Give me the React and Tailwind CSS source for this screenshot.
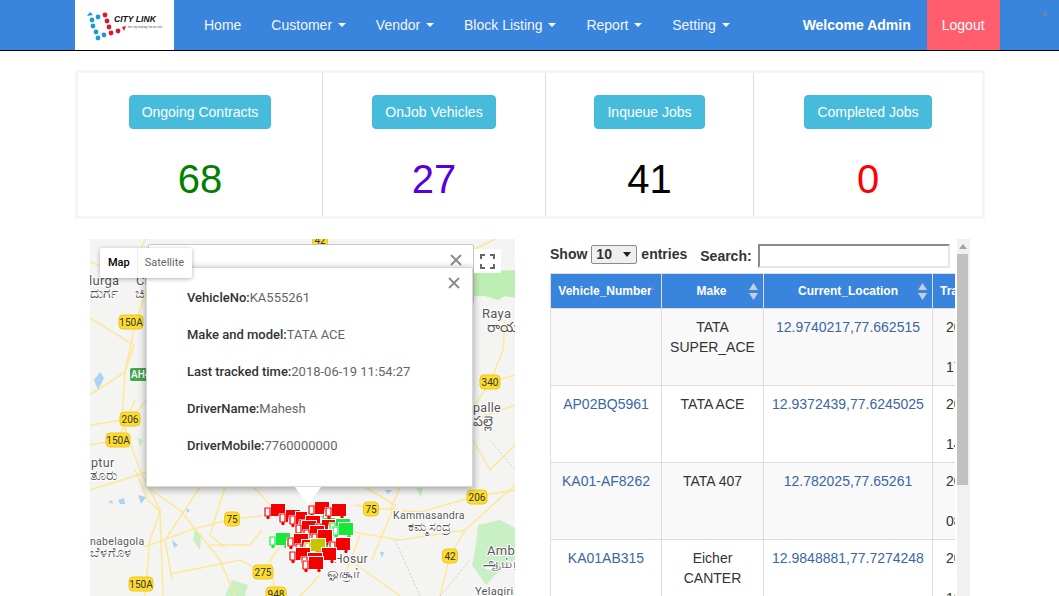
import React from 'react';

const navItems = [
  { label: 'Home' },
  { label: 'Customer', caret: true },
  { label: 'Vendor', caret: true },
  { label: 'Block Listing', caret: true },
  { label: 'Report', caret: true },
  { label: 'Setting', caret: true },
];

const stats = [
  { title: 'Ongoing Contracts', value: '68', color: 'text-[#008000]', width: 'w-[245px] border-r' },
  { title: 'OnJob Vehicles', value: '27', color: 'text-[#5500dd]', width: 'w-[223px] border-r' },
  { title: 'Inqueue Jobs', value: '41', color: 'text-black', width: 'w-[208px] border-r' },
  { title: 'Completed Jobs', value: '0', color: 'text-[#ff0000]', width: 'flex-1' },
];

const rows = [
  { no: '', make: ['TATA', 'SUPER_ACE'], loc: '12.9740217,77.662515', time: '17:21:45' },
  { no: 'AP02BQ5961', make: ['TATA ACE'], loc: '12.9372439,77.6245025', time: '14:38:02' },
  { no: 'KA01-AF8262', make: ['TATA 407'], loc: '12.782025,77.65261', time: '08:11:36' },
  { no: 'KA01AB315', make: ['Eicher', 'CANTER'], loc: '12.9848881,77.7274248', time: '10:52:19' },
];

const popupLines = [
  ['VehicleNo:', 'KA555261'],
  ['Make and model:', 'TATA ACE'],
  ['Last tracked time:', '2018-06-19 11:54:27'],
  ['DriverName:', 'Mahesh'],
  ['DriverMobile:', '7760000000'],
];

const roads = [
  'M90 262 L130 278 L145 239',
  'M148 285 L134 330 L125 372 L122 420 L140 470 L160 510 L163 596',
  'M90 318 L134 345 L125 372 L90 395',
  'M90 425 L130 419 L147 400',
  'M90 445 L118 440 L135 400',
  'M147 472 L90 490',
  'M135 470 L148 500 L160 512 L150 540 L145 596',
  'M147 546 L190 530 L232 519 L270 515',
  'M90 542 L147 546',
  'M147 487 L180 510 L220 560 L235 596',
  'M200 487 L165 540 L172 580',
  'M170 574 L240 560 L263 572',
  'M253 487 L290 525',
  'M225 487 L210 535 L225 548',
  'M355 505 L371 508 L420 512 L477 496 L515 490',
  'M340 530 L400 540 L465 530 L515 485',
  'M450 556 L440 596',
  'M465 530 L450 556',
  'M365 487 L395 505 L380 540 L372 560',
  'M400 487 L390 510',
  'M473 440 L490 470 L515 445',
  'M473 420 L515 405',
  'M490 382 L475 405',
  'M490 382 L515 375',
  'M505 320 L503 350 L490 382',
  'M473 250 L495 239',
  'M320 575 L300 596',
  'M275 590 L270 560 L285 540',
  'M350 560 L400 596',
  'M360 535 L345 575',
  'M210 545 L250 545 L262 530',
];

const trucks = [
  [318, 512, 'g'], [300, 544, 'g'], [315, 541, 'g'], [305, 530, 'y'],
  [265, 504, 'r'], [280, 510, 'r'], [290, 512, 'r'], [309, 502, 'r'], [326, 504, 'r'],
  [300, 516, 'r'], [296, 521, 'r'], [316, 520, 'r'], [304, 526, 'r'], [330, 519, 'g'], [333, 523, 'g'],
  [270, 533, 'g'], [288, 534, 'r'], [296, 540, 'r'], [312, 530, 'r'], [305, 539, 'y'],
  [330, 538, 'r'], [290, 548, 'r'], [316, 548, 'r'], [302, 553, 'r'], [303, 557, 'r'],
];

const shields = [
  [131, 322, '150A', 24], [118, 440, '150A', 24], [141, 584, '150A', 24], [130, 419, '206', 20],
  [477, 497, '206', 20], [232, 519, '75', 15], [371, 509, '75', 15], [320, 240, '42', 15],
  [450, 556, '42', 15], [490, 382, '340', 20], [263, 572, '275', 20], [276, 594, '948', 20],
];

const labels = [
  [89, 285, 'lurga', 13], [136, 285, 'Ch', 13], [482, 318, 'Raya', 13], [473, 412, 'palle', 12.5],
  [91, 467, 'ptur', 12.5], [90, 545, 'nabelagola', 10.5], [393, 519, 'Kammasandra', 10.5],
  [334, 563, 'Hosur', 12], [487, 555, 'Amb', 13], [475, 595, 'Yelagiri', 11],
  [90, 298, 'ದುರ್ಗ', 14], [135, 298, 'ಚಿ', 14], [487, 332, 'రాయ', 14], [473, 426, 'పల్లె', 14],
  [90, 480, 'ತೂರು', 14], [90, 557, 'ಬೆಳಗೊಳ', 13], [408, 531, 'ಕಮ್ಮಸಂದ್ರ', 13],
  [327, 578, 'ஓசூர்', 14], [483, 568, 'ஆம்பூர்', 14],
];

function Caret() {
  return <span className="ml-[5.8px] inline-block align-middle border-x-[4px] border-t-[4px] border-x-transparent border-t-white" />;
}

function SortIcon() {
  return (
    <svg width="9" height="17" viewBox="0 0 9 17" className="shrink-0">
      <path d="M4.5 0 L9 7 L0 7 Z M4.5 17 L9 10 L0 10 Z" fill="#c6cdd6" />
    </svg>
  );
}

function Logo() {
  const blue = [[98, 17], [92, 20], [93, 26], [96, 32], [98, 38], [104, 35]];
  const red = [[105, 15], [107, 21], [109, 27], [111, 33], [118, 31]];
  return (
    <svg width="99" height="50" viewBox="75 0 99 50" className="shrink-0 bg-white">
      <path d="M87 16 L90 12 L93 15 Z" fill="#1b9ad6" />
      {blue.map(([x, y]) => <circle key={`${x}-${y}`} cx={x} cy={y} r="2.4" fill="#1b9ad6" />)}
      {red.map(([x, y]) => <circle key={`${x}-${y}`} cx={x} cy={y} r="2.4" fill="#e2132d" />)}
      <path d="M122 27 L126 26 L124 31 Z" fill="#e2132d" />
      <text x="114" y="22" fontSize="8.6" fontWeight="700" fontStyle="italic" fontFamily="Liberation Sans, sans-serif" fill="#111">CITY LINK</text>
      <text x="128" y="28" fontSize="2.7" fontFamily="Liberation Sans, sans-serif" fill="#444">live city tracking, live on click</text>
    </svg>
  );
}

function MapArt() {
  return (
    <svg viewBox="90 239 425 357" width="425" height="357" className="absolute inset-0">
      <rect x="90" y="239" width="425" height="357" fill="#f4f4f2" />
      <path d="M473 272 L515 270 L515 298 L505 296 L498 300 L485 296 L473 296 Z" fill="#bdeeb4" />
      <path d="M478 525 L500 520 L515 528 L515 560 L495 575 L486 585 L472 565 L476 545 Z" fill="#c9efc4" />
      <path d="M195 528 L201 535 L200 550 L193 540 Z" fill="#c9efc4" />
      <path d="M232 580 L248 585 L245 596 L225 596 Z" fill="#c9efc4" />
      <path d="M137 437 L143 440 L140 447 Z" fill="#c9efc4" />
      <path d="M416 488 L423 488 L421 497 Z" fill="#c9efc4" />
      <path d="M94 380 L100 372 L104 378 L98 390 Z M138 495 L146 497 L141 504 Z M108 502 L112 500 L113 504 Z M118 500 L124 498 L125 504 L120 504 Z M186 508 L190 510 L187 513 Z M172 540 L178 545 L174 548 Z M380 552 L384 552 L382 558 Z M385 490 L392 490 L388 494 Z" fill="#a8d4f5" />
      {roads.map((d) => <path key={d} d={d} fill="none" stroke="#fde79a" strokeWidth="1.5" />)}
      <path d="M440 596 L470 560 M395 540 L420 596 M490 440 L515 470 M470 480 L478 492" fill="none" stroke="#c4c4c4" strokeWidth="0.8" strokeDasharray="2 2" />
      {labels.map(([x, y, t, s]) => (
        <text key={t} x={x} y={y} fontSize={s} letterSpacing="0.3" fontFamily="Roboto, 'Noto Sans', sans-serif" fill="#565656" stroke="#fff" strokeWidth="2" paintOrder="stroke">{t}</text>
      ))}
      {shields.map(([x, y, t, w]) => (
        <g key={`${x}-${t}`}>
          <rect x={x - w / 2} y={y - 7} width={w} height="14" rx="4" fill="#fcdc2e" stroke="#ecc81f" />
          <text x={x} y={y + 3.5} textAnchor="middle" fontSize="10" fontFamily="Roboto, sans-serif" fill="#333">{t}</text>
        </g>
      ))}
      <rect x="130" y="368" width="20" height="13" rx="2" fill="#46a64e" />
      <text x="131" y="378" fontSize="10" fontWeight="500" fontFamily="Roboto, sans-serif" fill="#fff">AH4</text>
      {trucks.map(([x, y, c], i) => {
        const fill = c === 'r' ? '#f40000' : c === 'g' ? '#18e83a' : '#c8c400';
        return (
          <g key={i}>
            <path d={`M${x + 5} ${y - 1} h16 v15 h-16 Z M${x - 1} ${y + 3} h6 v11 h-7 v-6 Z`} fill="#fff" />
            <path d={`M${x + 6} ${y} h14 v12 h-14 Z`} fill={fill} />
            <path d={`M${x} ${y + 4} h5 v8 h-5 v-4 Z`} fill="#fff" stroke={fill} strokeWidth="1.2" />
            <circle cx={x + 3} cy={y + 13.5} r="1.7" fill={fill} />
            <circle cx={x + 16} cy={y + 13.5} r="1.7" fill={fill} />
          </g>
        );
      })}
    </svg>
  );
}

function MapPanel() {
  return (
    <div className="relative w-[425px] h-[357px] shrink-0 overflow-hidden font-['Roboto',sans-serif]">
      <MapArt />

      {/* back info window */}
      <div className="absolute left-[58px] top-[5px] w-[326px] h-[60px] bg-white border border-[#c8c8c8] rounded-[2px]">
        <span className="absolute right-[11px] top-[9px] text-[#8a8a8a]">
          <svg width="12" height="12" viewBox="0 0 12 12"><path d="M1 1 L11 11 M11 1 L1 11" stroke="currentColor" strokeWidth="1.8" /></svg>
        </span>
      </div>

      {/* front info window */}
      <div className="absolute left-[56px] top-[28px] w-[327px] h-[220px] bg-white rounded-[2px] border border-[#d8d8d8] shadow-[0_2px_7px_1px_rgba(0,0,0,0.3)] pl-[40px] pt-[20px] text-[13px] text-[#666666]">
        <span className="absolute right-[12px] top-[9px] text-[#8a8a8a]">
          <svg width="12" height="12" viewBox="0 0 12 12"><path d="M1 1 L11 11 M11 1 L1 11" stroke="currentColor" strokeWidth="1.8" /></svg>
        </span>
        {popupLines.map(([k, v]) => (
          <p key={k} className="h-[37px] leading-[20px]">
            <span className="font-medium text-[#333]">{k}</span>{v}
          </p>
        ))}
      </div>
      <svg width="26" height="18" viewBox="0 0 26 18" className="absolute left-[205px] top-[248px]">
        <path d="M0 0 L13 18 L26 0 Z" fill="#fff" />
      </svg>

      {/* map type control */}
      <div className="absolute left-[10px] top-[9px] h-[30px] flex items-center bg-white rounded-[2px] shadow-[0_1px_4px_rgba(0,0,0,0.3)] text-[11px]">
        <span className="pl-[8px] pr-[7px] h-full flex items-center font-medium text-black border-r border-[#eee]">Map</span>
        <span className="pl-[7px] pr-[8px] h-full flex items-center text-[#666]">Satellite</span>
      </div>

      {/* fullscreen control */}
      <div className="absolute left-[384px] top-[10px] w-[27px] h-[24px] bg-white flex items-center justify-center">
        <svg width="15" height="15" viewBox="0 0 15 15">
          <path d="M1 5 V1 H5 M10 1 H14 V5 M14 10 V14 H10 M5 14 H1 V10" fill="none" stroke="#666" strokeWidth="2" />
        </svg>
      </div>
    </div>
  );
}

function VehicleTable() {
  return (
    <div className="flex shrink-0">
      <div className="w-[405px] mr-[2px] h-[357px] overflow-hidden">
        <div className="h-[34px] flex text-[14px] font-bold text-[#333]">
          <div className="flex items-center h-[30px]">
            Show
            <span className="mx-[4px] w-[46px] h-[19px] bg-[#efefef] border border-[#8a8a8a] rounded-[2px] flex items-center justify-between pl-[4px] pr-[5px]">
              10
              <svg width="8" height="5" viewBox="0 0 8 5"><path d="M0 0 H8 L4 5 Z" fill="#222" /></svg>
            </span>
            entries
          </div>
          <div className="flex items-center h-[34px] ml-[13px]">
            Search:
            <span className="ml-[6px] w-[192px] h-[24px] bg-white border-2 border-[#8a8a8a] border-r-[#e6e6e6] border-b-[#e6e6e6]" />
          </div>
        </div>
        <table className="table-fixed border-collapse w-[482px] text-[14px] text-[#333]">
          <colgroup>
            <col className="w-[111px]" />
            <col className="w-[102px]" />
            <col className="w-[169px]" />
            <col className="w-[100px]" />
          </colgroup>
          <thead>
            <tr className="h-[35px] bg-[#3984dc] text-white text-[12px] font-bold">
              <th className="border border-[#dddddd] relative pr-[2px]">
                Vehicle_Number
                <span className="absolute left-[100px] top-[13px] w-[3px] h-[3px] rounded-full bg-[#c060e0]" />
              </th>
              <th className="border border-[#dddddd] pr-[2px]">
                <div className="flex items-center justify-center relative">Make<span className="absolute right-[3px]"><SortIcon /></span></div>
              </th>
              <th className="border border-[#dddddd]">
                <div className="flex items-center justify-center relative">Current_Location<span className="absolute right-[5px]"><SortIcon /></span></div>
              </th>
              <th className="border border-[#dddddd] text-left pl-[7px]">Track_Time</th>
            </tr>
          </thead>
          <tbody>
            {rows.map((r, i) => (
              <tr key={i} className={`h-[77px] ${i % 2 === 0 ? 'bg-[#f9f9f9]' : 'bg-white'}`}>
                <td className="border border-[#dddddd] align-top text-center pt-[8px] leading-[20px] text-[#3a66a8]">{r.no}</td>
                <td className="border border-[#dddddd] align-top text-center pt-[8px] leading-[20px]">
                  {r.make.map((m) => <div key={m}>{m}</div>)}
                </td>
                <td className="border border-[#dddddd] align-top text-center pt-[8px] leading-[20px] text-[#3a66a8]">{r.loc}</td>
                <td className="border border-[#dddddd] align-top text-left pl-[13px] pt-[8px] leading-[20px] whitespace-nowrap">
                  2018-06-19
                  <div className="h-[20px]" />
                  {r.time}
                </td>
              </tr>
            ))}
          </tbody>
        </table>
      </div>

      {/* scrollbar */}
      <div className="w-[13px] h-[357px] bg-[#f1f1f1] flex flex-col items-start">
        <div className="w-[11px] h-[15px] flex items-center justify-center">
          <svg width="8" height="5" viewBox="0 0 8 5"><path d="M4 0 L8 5 H0 Z" fill="#a3a3a3" /></svg>
        </div>
        <div className="w-[11px] h-[231px] bg-[#c1c1c1]" />
      </div>
    </div>
  );
}

export default function App() {
  return (
    <div className="w-[1059px] h-[596px] overflow-hidden bg-white font-['Liberation_Sans',Arial,sans-serif]">
      {/* Navbar */}
      <nav className="h-[51px] pl-[75px] flex bg-[#3984dc] border-b border-black text-[14px] text-white relative">
        <Logo />
        <ul className="flex ml-[15px]">
          {navItems.map((item) => (
            <li key={item.label} className="px-[15px] h-[50px] flex items-center text-[#f2f6fc]">
              {item.label}
              {item.caret && <Caret />}
            </li>
          ))}
        </ul>
        <div className="ml-[58px] flex">
          <span className="h-[50px] flex items-center font-bold pr-[16px]">Welcome Admin</span>
          <span className="h-[50px] flex items-center px-[15px] bg-[#ff5e6e]">Logout</span>
        </div>
        <span className="absolute left-[1043px] top-[12px] w-[4px] h-[4px] bg-[#6f83a0]" />
      </nav>

      {/* Stats */}
      <div className="mt-[19px] ml-[75px] w-[910px] h-[149px] border-[3px] border-[#f5f5f5] flex">
        {stats.map((s) => (
          <div key={s.title} className={`${s.width} h-[143px] border-[#dddddd] flex flex-col items-center pt-[22px]`}>
            <span className="h-[34px] px-[12px] flex items-center text-[14px] text-white bg-[#46bbdc] border border-[#46b8da] rounded-[4px]">
              {s.title}
            </span>
            <span className={`mt-[28px] text-[40px] leading-[44px] ${s.color}`}>{s.value}</span>
          </div>
        ))}
      </div>

      {/* Map + table */}
      <div className="mt-[20px] ml-[90px] flex gap-[35px]">
        <MapPanel />
        <VehicleTable />
      </div>
    </div>
  );
}
